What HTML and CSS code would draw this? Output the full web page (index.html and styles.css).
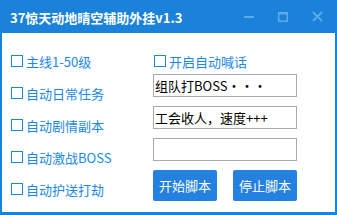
FILE: index.html
```html
<!DOCTYPE html>
<html lang="zh">
<head>
  <meta charset="UTF-8" />
  <title>37惊天动地晴空辅助外挂v1.3</title>
  <link rel="stylesheet" href="styles.css">
</head>
<body>
  <div class="window">
    <div class="titlebar">
      <span class="title">37惊天动地晴空辅助外挂v1.3</span>
      <div class="controls">
        <svg class="ctl" width="10" height="10" viewBox="0 0 10 10"><rect x="0" y="4" width="10" height="2" fill="#5ea8ec"/></svg>
        <svg class="ctl" width="10" height="10" viewBox="0 0 10 10"><rect x="0.75" y="0.75" width="8.5" height="8.5" fill="none" stroke="#5ea8ec" stroke-width="1.5"/><rect x="0" y="0" width="10" height="2.5" fill="#5ea8ec"/></svg>
        <svg class="ctl" width="11" height="11" viewBox="0 0 11 11"><path d="M1 1 L10 10 M10 1 L1 10" stroke="#5ea8ec" stroke-width="2"/></svg>
      </div>
    </div>
    <div class="content">
      <div class="left">
        <label class="check"><span class="box"></span>主线1-50级</label>
        <label class="check"><span class="box"></span>自动日常任务</label>
        <label class="check"><span class="box"></span>自动剧情副本</label>
        <label class="check"><span class="box"></span>自动激战BOSS</label>
        <label class="check"><span class="box"></span>自动护送打劫</label>
      </div>
      <div class="right">
        <label class="check top"><span class="box"></span>开启自动喊话</label>
        <div class="field">组队打BOSS・・・</div>
        <div class="field">工会收人，速度+++</div>
        <div class="field"></div>
        <div class="actions">
          <button>开始脚本</button>
          <button>停止脚本</button>
        </div>
      </div>
    </div>
  </div>
</body>
</html>
```

FILE: styles.css
```css
body {
  margin: 0;
  font-family: "Noto Sans CJK SC", "Noto Sans", sans-serif;
  background: #fff;
}
.window {
  width: 337px;
  height: 215px;
  box-sizing: border-box;
  border: 2px solid #1a82d8;
  border-top: none;
  border-bottom-width: 3px;
  background: #fff;
}
.titlebar {
  height: 33px;
  margin: 0 -2px;
  background: #1a82d8;
  display: flex;
  align-items: center;
  justify-content: space-between;
  padding: 0 14px 0 10px;
}
.title {
  color: #fff;
  font-weight: bold;
  font-size: 13px;
  line-height: 13px;
  margin-top: 1px;
}
.controls {
  display: flex;
  align-items: center;
  gap: 24px;
}
.content {
  display: flex;
  padding-left: 9px;
}
.left {
  width: 142px;
  padding-top: 12px;
  display: flex;
  flex-direction: column;
}
.check {
  display: flex;
  align-items: center;
  height: 32px;
  color: #1a88ea;
  font-size: 13px;
}
.box {
  width: 12px;
  height: 12px;
  box-sizing: border-box;
  border: 1.5px solid #1a88ea;
  margin-right: 3px;
}
.right {
  width: 144px;
  padding-top: 17px;
  display: flex;
  flex-direction: column;
}
.check.top {
  height: 22px;
  margin-left: 1px;
  margin-bottom: 2px;
}
.field {
  height: 23px;
  box-sizing: border-box;
  border: 1px solid #aaa;
  margin-bottom: 9px;
  font-size: 13px;
  line-height: 21px;
  padding-left: 1px;
  color: #000;
}
.actions {
  display: flex;
  justify-content: space-between;
}
button {
  width: 64px;
  height: 31px;
  border: none;
  border-radius: 2px;
  background: #2481e0;
  color: #fff;
  font-family: "Noto Sans CJK SC", sans-serif;
  font-size: 13px;
  padding: 0;
}
```
